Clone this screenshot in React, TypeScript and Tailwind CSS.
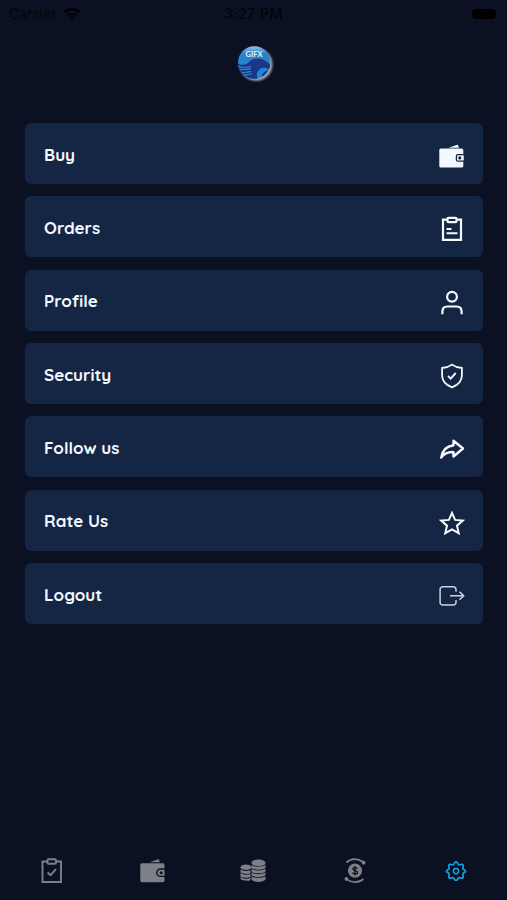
import React from 'react';

interface IconProps {
  className?: string;
}

interface MenuItem {
  label: string;
  icon: React.ReactNode;
}

const Icon: React.FC<IconProps & { children: React.ReactNode }> = ({ className = '', children }) => (
  <svg
    viewBox="0 0 26 26"
    className={`w-[26px] h-[26px] shrink-0 ${className}`}
    fill="none"
    stroke="currentColor"
    strokeWidth={2.2}
  >
    {children}
  </svg>
);

const WalletIcon: React.FC<IconProps & { gap: string }> = ({ className, gap }) => (
  <Icon className={className}>
    <path d="M9.5 4.8 18.2 1.8q.8-.2 1 .6l.7 2.4Z" fill="currentColor" stroke="none" />
    <rect x="0.3" y="5.6" width="24" height="19" rx="1.6" fill="currentColor" stroke="none" />
    <rect x="17.4" y="11.6" width="8" height="6.600" rx="1.500" fill="currentColor" stroke={gap} strokeWidth={1.3} />
    <circle cx="20.8" cy="14.9" r="1.6" fill={gap} stroke="none" />
  </Icon>
);

const Logo = () => (
  <svg viewBox="0 0 46 46" className="w-[46px] h-[46px] overflow-visible">
    <defs>
      <clipPath id="disc"><circle cx="23.2" cy="22.5" r="16.2" /></clipPath>
      <linearGradient id="sky" x1="0" y1="0" x2="0" y2="1">
        <stop offset="0" stopColor="#9cc8e8" />
        <stop offset="0.22" stopColor="#2f80c8" />
        <stop offset="1" stopColor="#1687df" />
      </linearGradient>
      <filter id="glow" x="-30%" y="-30%" width="160%" height="160%"><feGaussianBlur stdDeviation="1.3" /></filter>
    </defs>
    <circle cx="25.1" cy="24.4" r="16.3" fill="#a5a9b3" filter="url(#glow)" />
    <g clipPath="url(#disc)">
      <rect x="6" y="6" width="34" height="33" fill="url(#sky)" />
      <path d="M6 23c5 3 9 2 12-1 6-6 16-4 22 4v5c-5-4-9-4-12-1-3 3-3 6 0 10H20C15 36 10 33 6 29Z" fill="#1a3685" />
      <path d="M6 25.500c6 3 9 2 14 1M6 28.500c6 2 9 1 14 0M8 31.500c5 2 8 1 12 0M11 34.500c4 1 7 0 10-1" stroke="#2489dc" strokeWidth="1.2" fill="none" />
      <path d="M31 38c-1-4 2-7 8-8v9Z" fill="#1a3685" />
    </g>
    <text x="23" y="17" textAnchor="middle" fontSize="7.5" fontWeight="700" fill="#e8f3fb" fontFamily="Lato, sans-serif" textLength="17">GIFX</text>
  </svg>
);

const menu: MenuItem[] = [
  { label: 'Buy', icon: <WalletIcon gap="#152644" /> },
  {
    label: 'Orders',
    icon: (
      <Icon>
        <path d="M8 3.6H4v20.2h18V3.6h-4" />
        <rect x="8.5" y="1.8" width="9" height="4.4" rx="1" />
        <path d="M7.5 13h5M7.5 17.3h11" strokeWidth={1.9} />
      </Icon>
    ),
  },
  {
    label: 'Profile',
    icon: (
      <Icon>
        <circle cx="13" cy="6.8" r="4.9" />
        <path d="M3.4 24.3v-2.8c0-3 2-5 5-5h9.2c3 0 5 2 5 5v2.8" />
      </Icon>
    ),
  },
  {
    label: 'Security',
    icon: (
      <Icon>
        <path d="M13 1.6C10.5 3.5 7 4.7 3.1 5v7.5c0 5.5 4 9.5 9.9 11.8 5.9-2.3 9.9-6.3 9.9-11.8V5C19 4.7 15.5 3.5 13 1.6Z" strokeWidth={1.8} />
        <path d="m9 13 2.7 2.6 5-5.6" strokeWidth={1.9} />
      </Icon>
    ),
  },
  {
    label: 'Follow us',
    icon: (
      <Icon>
        <path d="M14.500 4.800 24 12.500l-9.500 8v-4.400C9 15.800 5 17.600 2.200 21.600 3.200 14.500 7.600 10.300 14.500 9.300Z" strokeWidth={2.400} strokeLinejoin="round" />
      </Icon>
    ),
  },
  {
    label: 'Rate Us',
    icon: (
      <Icon>
        <path d="m13 2.900 3.100 7 7.600.7-5.700 5.100 1.700 7.500-6.700-3.900-6.700 3.900L8 15.700 2.300 10.600l7.600-.7Z" strokeWidth={2} />
      </Icon>
    ),
  },
  {
    label: 'Logout',
    icon: (
      <Icon className="text-[#ccd3df]">
        <path d="M17 8.800V6.500a2.700 2.700 0 0 0-2.700-2.700H3.800a2.700 2.700 0 0 0-2.700 2.700v12.900a2.700 2.700 0 0 0 2.700 2.700h10.500A2.700 2.700 0 0 0 17 19.400v-2.500M11 12.800h13.500M20.500 8.800l4.200 4-4.200 4" strokeWidth={1.5} />
      </Icon>
    ),
  },
];

const tabs: React.ReactNode[] = [
  <Icon key="tasks">
    <path d="M9.500 3.500H4.500v20.500H23V3.500h-5" strokeWidth={1.9} />
    <rect x="9.500" y="1.200" width="8.500" height="4.600" rx="1" strokeWidth={1.9} />
    <path d="m9.500 14.500 3 2.700 5.500-6" strokeWidth={1.9} />
  </Icon>,
  <Icon key="wallet" className="translate-x-[1px]">
    <path d="M9.500 4.300 18.200 1.300q.8-.2 1 .6l.7 2.400Z" fill="currentColor" stroke="none" />
    <rect x="0.300" y="5.200" width="24.200" height="19" rx="1.600" fill="currentColor" stroke="none" />
    <path d="M26 11h-5.500a3.600 3.600 0 0 0 0 7.400H26" stroke="#0b1122" strokeWidth={1.400} />
    <circle cx="21.200" cy="14.700" r="1.500" fill="#0b1122" stroke="none" />
  </Icon>,
  <Icon key="coins">
    <g fill="currentColor" stroke="none">
      <ellipse cx="6" cy="9.300" rx="5.500" ry="2.800" />
      <path d="M.5 11.200c2 2 7 2.200 10 1v3c-3 1.200-8 .8-10-.9ZM.5 15.100c2 2 7 2.200 10 1v3c-3 1.200-8 .8-10-.9ZM.5 18.900c2 2 7 2.200 10 1v2.300c-3 1-8 .5-10-1.200Z" />
      <ellipse cx="18.500" cy="4.900" rx="7" ry="3.300" />
      <path d="M11.500 6.800c2.500 2.600 11.500 2.600 14 0v2.900c-2.500 2.600-11.500 2.600-14 0ZM11.500 10.500c2.500 2.600 11.500 2.600 14 0v2.900c-2.500 2.600-11.500 2.600-14 0ZM11.500 14.200c2.500 2.600 11.500 2.600 14 0v2.900c-2.500 2.600-11.500 2.600-14 0ZM11.500 17.900c2.500 2.600 11.500 2.600 14 0v3.600c-2.500 3.200-11.500 3.200-14 0Z" />
    </g>
  </Icon>,
  <Icon key="exchange">
    <circle cx="13" cy="12.700" r="7.100" fill="currentColor" stroke="none" />
    <path d="M4.500 4.500C9 .2 16 .2 21 4M21.500 20.900C17 25.200 10 25.200 5 21.400" strokeWidth={1.800} />
    <circle cx="21.600" cy="4.700" r="1.900" fill="currentColor" stroke="none" />
    <circle cx="4.400" cy="20.900" r="1.900" fill="currentColor" stroke="none" />
    <path d="M15.500 10.700c-.7-1.600-4.700-1.600-4.700.4 0 2.200 4.800 1 4.800 3.300 0 2-4.200 2-5.100.2M13 8v9.600" stroke="#0b1122" strokeWidth={1.300} />
  </Icon>,
  <Icon key="settings" className="text-[#12a5e2]">
    <path d="M13 3.900c1.700 0 1.600 2.300 2.900 2.800s2.900-1.100 4 0-.5 2.700 0 4 2.600 1.100 2.600 2.500-2.100 1.200-2.600 2.500 1.100 2.900 0 4-2.700-.5-4 0-1.200 2.600-2.900 2.600-1.600-2.100-2.900-2.600-2.900 1.100-4 0 .5-2.700 0-4-2.600-1.100-2.600-2.500 2.100-1.200 2.600-2.500-1.100-2.900 0-4 2.700.5 4 0S11.300 3.900 13 3.900Z" strokeWidth={1.700} />
    <circle cx="13" cy="13.100" r="2.600" strokeWidth={1.500} />
  </Icon>,
];

const StatusBar = () => (
  <div className="grid grid-cols-3 items-center h-7 pb-px px-[9px] font-['Inter',sans-serif] text-[14px] text-[#020408]">
    <div className="flex items-center gap-1.5 tracking-[0.25px]">
      <span>Carrier</span>
      <svg viewBox="0 0 18 14" className="w-[18px] h-[14px]" fill="none" stroke="currentColor" strokeWidth={2.6}>
        <path d="M1.500 5.200c4.300-4 10.700-4 15 0M4.600 8.500c2.600-2.300 6.200-2.300 8.800 0" />
        <path d="m9 13.500-2.700-2.700c1.500-1.300 3.900-1.300 5.400 0Z" fill="currentColor" stroke="none" />
      </svg>
    </div>
    <span className="text-center font-medium tracking-[0.5px] whitespace-nowrap">3:27 PM</span>
    <div className="justify-self-end w-6 h-2.5 mr-[2px] rounded-[4px] bg-black"></div>
  </div>
);

const App: React.FC = () => {
  return (
    <div className="flex flex-col h-[900px] w-full overflow-hidden bg-[#0b1122]">
      <StatusBar />

      <header className="flex justify-center pt-3">
        <Logo />
      </header>

      {/* Menu rows */}
      <main className="flex-1 flex flex-col gap-[12.3px] pt-[37.1px] pl-[25px] pr-[24.5px]">
        {menu.map((item) => (
          <button
            key={item.label}
            className="flex items-center justify-between h-[61px] shrink-0 rounded-[6px] bg-[#152644] pl-[19px] pr-[17.5px] text-[#f4f8ff]"
          >
            <span className="font-['Quicksand','Lato',sans-serif] text-[17px] font-bold pt-[2px]">
              {item.label}
            </span>
            <span className="pt-[5px]">{item.icon}</span>
          </button>
        ))}
      </main>

      {/* Bottom tabs */}
      <nav className="grid grid-cols-5 justify-items-center h-[42px] text-[#7d8088]">
        {tabs}
      </nav>
    </div>
  );
};

export default App;
